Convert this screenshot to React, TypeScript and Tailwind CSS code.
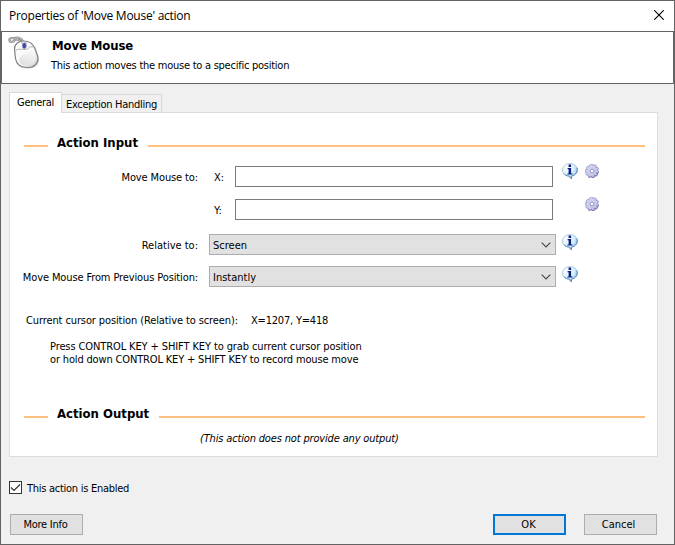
import type { ReactNode } from "react";

function MouseIcon() {
  return (
    <svg width="32" height="34" viewBox="0 0 32 34" className="shrink-0">
      <defs>
        <linearGradient id="mouseBody" x1="0" y1="0" x2="1" y2="1">
          <stop offset="0" stopColor="#ffffff" />
          <stop offset="0.6" stopColor="#f8f8f8" />
          <stop offset="1" stopColor="#c8c8c8" />
        </linearGradient>
        <linearGradient id="mouseShade" x1="0.6" y1="0" x2="0.3" y2="1">
          <stop offset="0" stopColor="#fafafa" />
          <stop offset="1" stopColor="#dedede" />
        </linearGradient>
      </defs>
      <path d="M15.500 6.500C13.500 1.800 9 .8 6.500 2.500C3.500 1 .8 2.500 1.500 4.500C2.500 7 5.500 6 7 4C8.500 2.500 11 4 12.500 5.500" fill="none" stroke="#888" strokeWidth="2.200" />
      <path d="M15.500 6.500C13.500 1.800 9 .8 6.500 2.500C3.500 1 .8 2.500 1.500 4.500C2.500 7 5.500 6 7 4C8.500 2.500 11 4 12.500 5.500" fill="none" stroke="#d2d2d2" strokeWidth="0.900" />
      <path d="M8 12C9 7 13 5.500 18 6C23 6 26 9 27.500 12.500L30.500 20C33 27 28 32.500 21 32.500C13 32.500 8.500 30 7.800 24Z" fill="#a0a0a0" opacity="0.5" />
      <path d="M6.500 13.500C6 8 10.500 5 16 5C21.500 5 24.500 7.500 26.500 11.500L29.300 19C31.500 26 27 31.500 20 31.500C13 31.500 8.500 29 7.500 22.500Z" fill="url(#mouseBody)" stroke="#828282" strokeWidth="1.200" />
      <path d="M11 25C11 17 21 19 24.500 13C27 15 27 18 27.500 21C28 26 24 29.500 19.500 29.500C15 29.500 12 28 11 25Z" fill="url(#mouseShade)" />
      <path d="M7 15.500C9 12 13 13.500 17 13.500C21 13.500 21 9.500 25.500 11M14 5.500V8M18 5.500V8" fill="none" stroke="#a4a4a4" strokeWidth="0.800" />
      <ellipse cx="16.300" cy="9.700" rx="2" ry="2.900" fill="#4545aa" stroke="#8d8db8" strokeWidth="0.700" />
    </svg>
  );
}

function InfoIcon({ className = "" }: { className?: string }) {
  return (
    <svg width="16" height="17" viewBox="0 0 16 17" className={`shrink-0 ${className}`}>
      <defs>
        <radialGradient id="infoFill" cx="0.35" cy="0.3" r="0.75">
          <stop offset="0" stopColor="#ffffff" />
          <stop offset="0.5" stopColor="#e2f2ff" />
          <stop offset="1" stopColor="#86c2f5" />
        </radialGradient>
      </defs>
      <path d="M8 .5C3.700.5.5 3.300.5 7C.5 10.500 3.300 12.700 6.600 13.100L9.400 16V13.100C13 12.500 15.500 10.200 15.500 7C15.500 3.300 12.300.5 8 .5Z" fill="url(#infoFill)" stroke="#b3c6d6" strokeWidth="0.900" />
      <path d="M14.900 4.800C16 8.500 13.800 12 9.500 13.100V15.700L6.800 13.100C4.500 12.800 2.800 12 1.800 10.600" fill="none" stroke="#4b82b3" strokeWidth="0.900" />
      <path d="M6.600 1.600H9.100V3.900H6.600ZM5.600 5H9.100V10.400H10.400V11.600H5.400V10.400H6.600V6.200H5.600Z" fill="#06217e" />
    </svg>
  );
}

function GearIcon({ className = "" }: { className?: string }) {
  return (
    <svg width="14" height="14" viewBox="0 0 14 14" className={`shrink-0 ${className}`}>
      <defs>
        <linearGradient id="gearFill" x1="0" y1="0" x2="1" y2="1">
          <stop offset="0" stopColor="#dedef5" />
          <stop offset="1" stopColor="#b7b7e0" />
        </linearGradient>
      </defs>
      <path
        d="M6 0H8L8.500 2L10 .7L11.500 1.800L11 3.500L12.900 3.400L13.600 5.200L12 6.200L13.900 7.200L13.500 9L11.800 9L12.500 10.800L11.200 12.200L9.700 11.300L9.200 13.300L7.300 13.900L6.400 12.200L5 13.600L3.300 12.900L3.400 11.200L1.700 11.300L.6 9.700L1.900 8.400L0 7.700L.3 5.700L2.200 5.500L1.200 4L2.300 2.400L4.100 2.900L4.400 1Z"
        fill="url(#gearFill)"
        stroke="#8080b8"
        strokeWidth="0.600"
        strokeLinejoin="round"
      />
      <path d="M13.500 9L11.800 9L12.500 10.800L11.200 12.200L9.700 11.300L9.200 13.300L7.300 13.900L6.400 12.200L5 13.600L3.300 12.900" fill="none" stroke="#6464a0" strokeWidth="0.700" />
      <circle cx="7" cy="7" r="1.800" fill="#ffffff" stroke="#8e8ec4" strokeWidth="0.900" />
    </svg>
  );
}

function SectionHeading({ children }: { children: ReactNode }) {
  return (
    <div className="ml-3.5 mr-3 flex h-5 items-center">
      <div className="mt-1.5 h-0.5 w-6 bg-[#ffc080]" />
      <h2 className="ml-[9px] mr-[10px] text-[13px] leading-5 font-bold">{children}</h2>
      <div className="mt-1.5 h-0.5 flex-1 bg-[#ffc080]" />
    </div>
  );
}

function Label({ children, className = "" }: { children: ReactNode; className?: string }) {
  return <label className={`w-[188px] shrink-0 text-right leading-[23px] ${className}`}>{children}</label>;
}

function Select({ children }: { children: ReactNode }) {
  return (
    <div className="ml-[11px] flex h-[21px] w-[347px] items-center justify-between border border-[#adadad] bg-[#e1e1e1] pr-1 pl-[3px]">
      <span className="pt-0.5">{children}</span>
      <svg width="10" height="6" viewBox="0 0 10 6">
        <path d="M.7.7L5 5L9.300.7" fill="none" stroke="#444" strokeWidth="1.100" />
      </svg>
    </div>
  );
}

function CoordinateInput() {
  return <input className="ml-[11px] h-[21px] w-[318px] border border-[#7a7a7a] bg-white px-1 outline-none" />;
}

function Button({ children, primary = false, className = "" }: { children: ReactNode; primary?: boolean; className?: string }) {
  return (
    <button
      className={`flex h-[21px] w-[73px] items-center justify-center bg-[#e1e1e1] ${
        primary ? "border-2 border-[#0078d7]" : "border border-[#adadad]"
      } ${className}`}
    >
      {children}
    </button>
  );
}

export default function App() {
  return (
    <div className="h-[545px] w-[675px] overflow-hidden border border-[#636363] bg-[#f0f0f0] font-['DejaVu_Sans_Condensed','DejaVu_Sans',sans-serif] text-[11px] leading-[13px] whitespace-nowrap text-black">
      <div className="flex h-[30px] items-center justify-between bg-white pr-[10px] pl-2">
        <span className="mb-px font-['Open_Sans','Noto_Sans',sans-serif] text-[12px] tracking-[-0.26px]">Properties of 'Move Mouse' action</span>
        <svg width="10" height="10" viewBox="0 0 10 10" className="mb-0.5">
          <path d="M.3.3L9.700 9.700M9.700.3L.3 9.700" stroke="#000" strokeWidth="1.100" />
        </svg>
      </div>

      <header className="flex h-[53px] border border-[#646464] bg-white pt-1 pl-1.5">
        <MouseIcon />
        <div className="ml-3 pt-[2px]">
          <h1 className="text-[13px] leading-4 font-bold tracking-[-0.1px]">Move Mouse</h1>
          <p className="mt-[5px] ml-[-1px] tracking-[-0.25px]">This action moves the mouse to a specific position</p>
        </div>
      </header>

      <main className="px-2 pt-2">
        <div className="flex h-5 items-end">
          <div className="relative -mb-px h-[21px] w-[53px] border border-b-0 border-[#d9d9d9] bg-white pl-[7px] leading-[19px] tracking-[-0.28px]">General</div>
          <div className="h-[18px] w-[100px] border border-b-0 border-l-0 border-[#d9d9d9] pl-[4px] leading-[19px] tracking-[-0.28px]">Exception Handling</div>
        </div>

        <section className="h-[345px] w-[649px] border border-[#dcdcdc] bg-white pt-5">
          <SectionHeading>Action Input</SectionHeading>

          <div className="mt-[13px] flex h-[21px]">
            <Label className="tracking-[-0.12px]">Move Mouse to:</Label>
            <span className="ml-4 w-[10px] leading-[23px]">X:</span>
            <CoordinateInput />
            <InfoIcon className="-mt-[3px] ml-[9px]" />
            <GearIcon className="-mt-[2px] ml-[7px]" />
          </div>
          <div className="mt-3 flex h-[21px]">
            <span className="ml-[204px] w-[10px] leading-[23px]">Y:</span>
            <CoordinateInput />
            <GearIcon className="-mt-[2px] ml-8" />
          </div>
          <div className="mt-3.5 flex h-[21px]">
            <Label>Relative to:</Label>
            <Select>Screen</Select>
            <InfoIcon className="ml-1.5" />
          </div>
          <div className="mt-[11px] flex h-[21px]">
            <Label className="tracking-[-0.12px]">Move Mouse From Previous Position:</Label>
            <Select>Instantly</Select>
            <InfoIcon className="ml-1.5" />
          </div>

          <div className="mt-[27px] ml-4 flex">
            <span className="w-[225px] tracking-[-0.11px]">Current cursor position (Relative to screen):</span>
            <span className="tracking-[-0.2px]">X=1207, Y=418</span>
          </div>
          <p className="mt-[13px] ml-10 tracking-[-0.11px]">Press CONTROL KEY + SHIFT KEY to grab current cursor position</p>
          <p className="ml-10 tracking-[-0.16px]">or hold down CONTROL KEY + SHIFT KEY to record mouse move</p>

          <div className="mt-[38px]">
            <SectionHeading>Action Output</SectionHeading>
          </div>
          <p className="mt-2 ml-[190px] tracking-[-0.16px] italic">(This action does not provide any output)</p>
        </section>

        <label className="mt-6 flex h-[13px] items-center">
          <span className="flex size-[13px] items-center justify-center border border-[#333] bg-white">
            <svg width="11" height="11" viewBox="0 0 11 11">
              <path d="M1 5.500L4 8.500L10 2.500" fill="none" stroke="#333" strokeWidth="1.200" />
            </svg>
          </span>
          <span className="mt-0.5 ml-[5px] tracking-[-0.27px]">This action is Enabled</span>
        </label>

        <footer className="mt-5 flex pl-px">
          <Button className="pr-0.5 tracking-[-0.27px]">More Info</Button>
          <Button primary className="ml-[410px] pr-0.5">OK</Button>
          <Button className="ml-[18px] pr-1">Cancel</Button>
        </footer>
      </main>
    </div>
  );
}
